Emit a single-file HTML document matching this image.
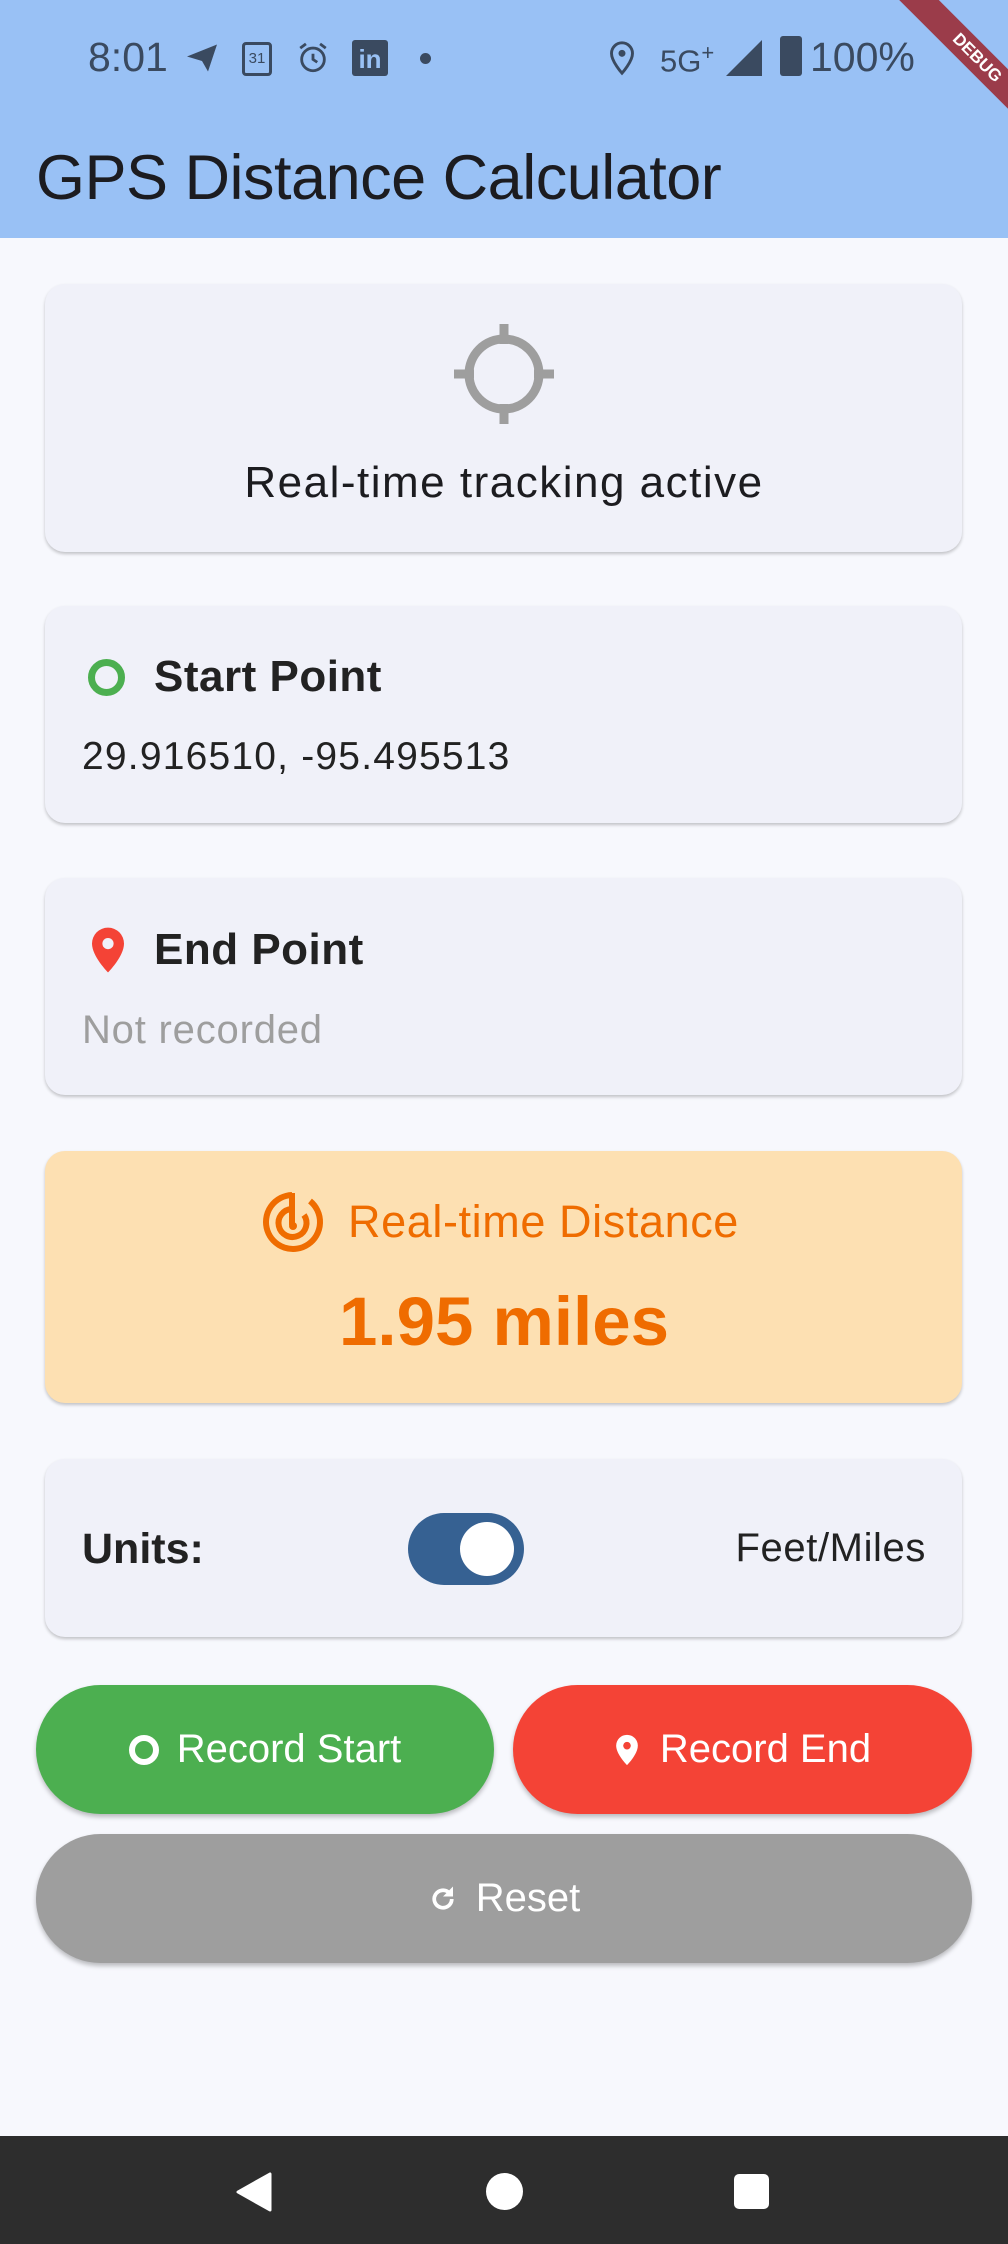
<!DOCTYPE html>
<html><head><meta charset="utf-8"><style>
*{margin:0;padding:0;box-sizing:border-box}
body{width:1008px;height:2244px;background:#f7f8fd;font-family:"Liberation Sans",sans-serif;position:relative;overflow:hidden;color:#1c1c20}
.abs{position:absolute}
.appbar{left:0;top:0;width:1008px;height:238px;background:#99c1f5}
.card{position:absolute;left:45px;width:917px;background:#f0f1f9;border-radius:20px;box-shadow:0 2px 3px rgba(0,0,0,0.22)}
.btn{position:absolute;border-radius:65px;color:#fff;font-size:40px;display:flex;align-items:center;justify-content:center;box-shadow:0 3px 5px rgba(0,0,0,0.25)}
</style></head><body>
<div class="abs appbar"></div>
<div class="abs" style="left:88px;top:34px;font-size:41px;color:#3a4a60">8:01</div>
<svg class="abs" style="left:182px;top:40px" width="40" height="36" viewBox="0 0 24 24"><path d="M2 11 L22 3 L16 21 L12 14 Z" fill="#3a4a60"/></svg>
<div class="abs" style="left:242px;top:42px;width:30px;height:34px;border:3px solid #3a4a60;border-radius:4px;font-size:15px;color:#3a4a60;text-align:center;line-height:28px">31</div>
<svg class="abs" style="left:296px;top:40px" width="34" height="36" viewBox="0 0 24 24"><circle cx="12" cy="13" r="8" fill="none" stroke="#3a4a60" stroke-width="2"/><path d="M12 9v4l3 2M3 5l4-3M21 5l-4-3" stroke="#3a4a60" stroke-width="2" fill="none"/></svg>
<div class="abs" style="left:352px;top:40px;width:36px;height:36px;background:#3a4a60;border-radius:3px;color:#99c1f5;font-weight:bold;font-size:26px;line-height:38px;text-align:center">in</div>
<div class="abs" style="left:420px;top:53px;width:11px;height:11px;border-radius:50%;background:#3a4a60"></div>
<svg class="abs" style="left:608px;top:40px" width="28" height="36" viewBox="0 0 24 30"><path d="M12 2a9 9 0 0 0-9 9c0 7 9 17 9 17s9-10 9-17a9 9 0 0 0-9-9z" fill="none" stroke="#3a4a60" stroke-width="2.5"/><circle cx="12" cy="11" r="3" fill="#3a4a60"/></svg>
<div class="abs" style="left:660px;top:40px;font-size:31px;color:#3a4a60">5G<sup style="font-size:22px">+</sup></div>
<svg class="abs" style="left:726px;top:40px" width="36" height="36"><path d="M36 0V36H0Z" fill="#3a4a60"/></svg>
<div class="abs" style="left:780px;top:36px;width:22px;height:40px;background:#3a4a60;border-radius:3px"></div>
<div class="abs" style="left:810px;top:34px;font-size:41px;color:#3a4a60">100%</div>
<div class="abs" style="left:872px;top:44px;width:210px;height:28px;background:#9b3c4a;transform:rotate(45deg);color:#fff;font-size:17px;font-weight:bold;text-align:center;line-height:28px">DEBUG</div>
<div class="abs" style="left:36px;top:142px;font-size:63px;color:#1c1c20;letter-spacing:-0.5px">GPS Distance Calculator</div>

<div class="card" style="top:284px;height:268px"></div>
<svg class="abs" style="left:454px;top:324px" width="100" height="100" viewBox="0 0 100 100"><circle cx="50" cy="50" r="35" fill="none" stroke="#9e9e9e" stroke-width="9"/><path d="M50 0v20M50 80v20M0 50h20M80 50h20" stroke="#9e9e9e" stroke-width="9"/></svg>
<div class="abs" style="left:0;width:1008px;top:458px;text-align:center;font-size:44px;letter-spacing:1.5px">Real-time tracking active</div>

<div class="card" style="top:606px;height:217px"></div>
<div class="abs" style="left:88px;top:659px;width:37px;height:37px;border:7px solid #4caf50;border-radius:50%"></div>
<div class="abs" style="left:154px;top:652px;font-size:44px;font-weight:bold;color:#222;letter-spacing:0.5px">Start Point</div>
<div class="abs" style="left:82px;top:735px;font-size:39px;color:#222;letter-spacing:1.2px">29.916510, -95.495513</div>

<div class="card" style="top:878px;height:217px"></div>
<svg class="abs" style="left:88px;top:926px" width="40" height="48" viewBox="0 0 24 30"><path d="M12 1a10 10 0 0 0-10 10c0 8 10 18 10 18s10-10 10-18A10 10 0 0 0 12 1z" fill="#f44336"/><circle cx="12" cy="11" r="3.5" fill="#f0f1f9"/></svg>
<div class="abs" style="left:154px;top:925px;font-size:44px;font-weight:bold;color:#222;letter-spacing:0.5px">End Point</div>
<div class="abs" style="left:82px;top:1008px;font-size:40px;color:#9e9e9e;letter-spacing:0.8px">Not recorded</div>

<div class="card" style="top:1151px;height:252px;background:#fde0b2"></div>
<svg class="abs" style="left:262px;top:1191px" width="64" height="64" viewBox="0 0 64 64"><path d="M30 4 A27 27 0 1 0 48 10" fill="none" stroke="#ef6c00" stroke-width="6"/><path d="M30 18 A14 14 0 1 0 42 24" fill="none" stroke="#ef6c00" stroke-width="6"/><path d="M30 2 V34" stroke="#ef6c00" stroke-width="6"/><circle cx="31" cy="35" r="4" fill="#ef6c00"/></svg>
<div class="abs" style="left:348px;top:1196px;font-size:45px;color:#ef6c00;letter-spacing:0.6px">Real-time Distance</div>
<div class="abs" style="left:0;width:1008px;top:1282px;text-align:center;font-size:69px;font-weight:bold;color:#ef6c00">1.95 miles</div>

<div class="card" style="top:1459px;height:178px"></div>
<div class="abs" style="left:82px;top:1525px;font-size:43px;font-weight:bold;color:#222">Units:</div>
<div class="abs" style="left:408px;top:1513px;width:116px;height:72px;border-radius:36px;background:#366192"></div>
<div class="abs" style="left:460px;top:1522px;width:54px;height:54px;border-radius:50%;background:#fff"></div>
<div class="abs" style="left:600px;width:926px;left:0;text-align:right;top:1526px;font-size:40px;color:#222;letter-spacing:0.6px">Feet/Miles</div>

<div class="btn" style="left:36px;top:1685px;width:458px;height:129px;background:#4caf50"><span style="display:inline-block;width:30px;height:30px;border:6px solid #fff;border-radius:50%;margin-right:18px"></span>Record Start</div>
<div class="btn" style="left:513px;top:1685px;width:459px;height:129px;background:#f44336"><svg width="26" height="34" viewBox="0 0 24 30" style="margin-right:20px"><path d="M12 1a10 10 0 0 0-10 10c0 8 10 18 10 18s10-10 10-18A10 10 0 0 0 12 1z" fill="#fff"/><circle cx="12" cy="11" r="3.5" fill="#f44336"/></svg>Record End</div>
<div class="btn" style="left:36px;top:1834px;width:936px;height:129px;background:#9e9e9e"><svg width="30" height="30" viewBox="0 0 24 24" style="margin-right:18px"><path d="M19 12a7 7 0 1 1-2.1-5" fill="none" stroke="#fff" stroke-width="3"/><path d="M20 2v8h-8z" fill="#fff"/></svg>Reset</div>

<div class="abs" style="left:0;top:2136px;width:1008px;height:108px;background:#2d2d2d"></div>
<svg class="abs" style="left:234px;top:2172px" width="40" height="40"><path d="M36 2V38L4 20Z" fill="#fff" stroke="#fff" stroke-width="3" stroke-linejoin="round"/></svg>
<div class="abs" style="left:486px;top:2173px;width:37px;height:37px;border-radius:50%;background:#fff"></div>
<div class="abs" style="left:734px;top:2174px;width:35px;height:35px;border-radius:5px;background:#fff"></div>
</body></html>
